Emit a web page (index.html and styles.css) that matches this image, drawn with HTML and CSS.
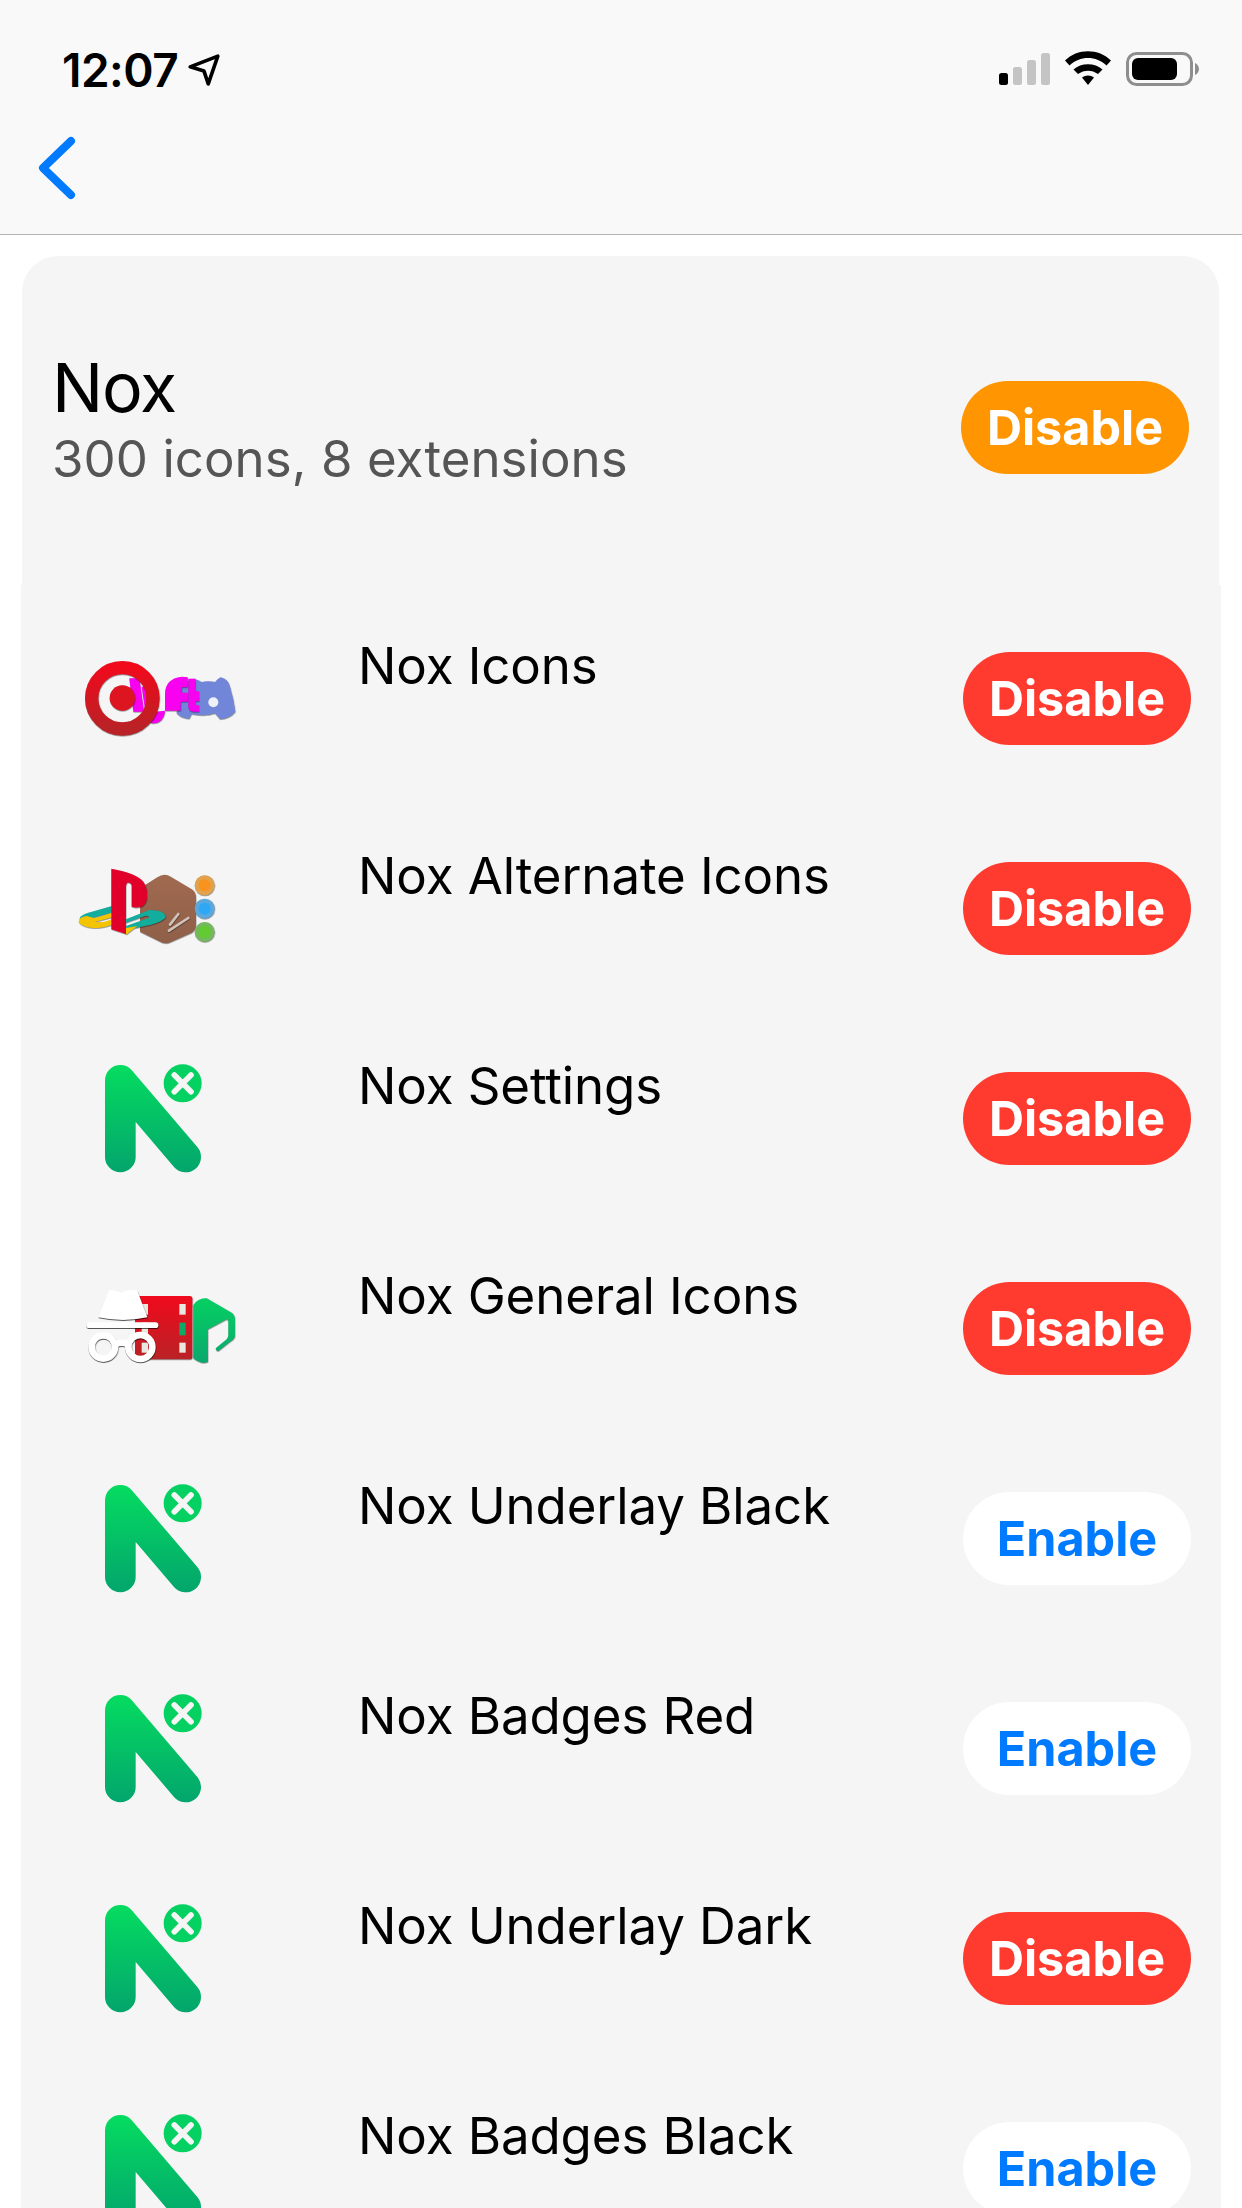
FILE: index.html
```html
<!DOCTYPE html>
<html lang="en">
<head>
<meta charset="utf-8">
<title>Nox</title>
<link rel="stylesheet" href="styles.css">
</head>
<body>
<svg class="defs" width="0" height="0" aria-hidden="true">
  <defs>
    <linearGradient id="g-green" gradientUnits="userSpaceOnUse" x1="0" y1="75" x2="0" y2="397">
      <stop offset="0" stop-color="#05dc60"/><stop offset="1" stop-color="#03a56c"/>
    </linearGradient>
    <linearGradient id="g-green2" x1="0" y1="0" x2="0" y2="1">
      <stop offset="0" stop-color="#05d062"/><stop offset="1" stop-color="#0aa86e"/>
    </linearGradient>
    <linearGradient id="g-red" x1="0" y1="0" x2="0" y2="1">
      <stop offset="0" stop-color="#f00a1c"/><stop offset="1" stop-color="#b92226"/>
    </linearGradient>
    <linearGradient id="g-brown" x1="0" y1="0" x2="0" y2="1">
      <stop offset="0" stop-color="#a06a50"/><stop offset="1" stop-color="#8f5f48"/>
    </linearGradient>
    <symbol id="nox-mark" viewBox="0 0 660 468">
      <path d="M211 351V121L407 351" fill="none" stroke="url(#g-green)" stroke-width="92" stroke-linecap="round" stroke-linejoin="round"/>
      <circle cx="398" cy="130" r="57" fill="#05d062"/>
      <path d="M373 105l50 50M423 105l-50 50" fill="none" stroke="#f5f5f5" stroke-width="17" stroke-linecap="round"/>
    </symbol>
  </defs>
</svg>
<header class="top">
  <div class="status">
    <span class="time">12:07</span>
    <svg class="loc" viewBox="0 0 32 32"><path d="M3 13L29 3L20 29L16 17Z" fill="none" stroke="#000" stroke-width="3.4" stroke-linejoin="round"/></svg>
    <svg class="sys" viewBox="0 0 210 60">
      <rect x="9" y="33" width="9" height="12" rx="2.5" fill="#000"/>
      <rect x="23" y="27" width="9" height="18" rx="2.5" fill="#c4c4c4"/>
      <rect x="37" y="20" width="9" height="25" rx="2.5" fill="#c4c4c4"/>
      <rect x="51" y="13" width="9" height="32" rx="2.5" fill="#c4c4c4"/>
      <path d="M75 20.5C87 8 109 8 121 20.5L116.500 25.500C106.500 15.500 89.500 15.500 79.500 25.500Z" fill="#000"/>
      <path d="M83.500 29.500C91 22.500 105 22.500 112.500 29.500L108 34C102 29.500 94 29.500 88 34Z" fill="#000"/>
      <path d="M92 37.500C95.500 34.800 100.500 34.800 104 37.500L98 45Z" fill="#000"/>
      <rect x="137.500" y="13.500" width="64" height="31" rx="9" fill="none" stroke="#8e8e8e" stroke-width="3"/>
      <rect x="142" y="18" width="45" height="22" rx="6" fill="#000"/>
      <path d="M205 23c2.500 1 4 3.500 4 6s-1.500 5-4 6Z" fill="#8e8e8e"/>
    </svg>
  </div>
  <nav class="nav">
    <svg class="back" viewBox="0 0 44 70"><path d="M36 8L8 35L36 62" fill="none" stroke="#007aff" stroke-width="8" stroke-linecap="round" stroke-linejoin="round"/></svg>
  </nav>
</header>
<main>
  <section class="pack">
    <div class="pack-text">
      <h1 class="pack-name">Nox</h1>
      <p class="pack-info">300 icons, 8 extensions</p>
    </div>
    <button class="pill pill-orange pill-head">Disable</button>
  </section>
  <ul class="list">
    <li class="row">
      <svg class="ico" viewBox="0 0 660 468">
        <g class="sh">
          <path d="M432 176Q450 182 455 186Q475 182 495 186Q500 178 512 172Q535 178 540 200Q552 240 556 275Q540 295 510 298L495 280Q465 290 425 282L418 296Q395 296 380 280Q382 230 395 200Q405 182 432 176Z" fill="#7286d9"/>
          <circle cx="490" cy="247" r="15" fill="#eef0fa"/>
        </g>
        <g class="sh">
          <path d="M238 175H268L282 275H250Z" fill="#f800f0"/>
          <path d="M275 200H305V262Q305 275 318 275L345 272Q342 310 305 310L290 300Z" fill="#f800f0"/>
          <path d="M345 272V222Q345 176 395 170L413 172V202H395V218H413V245H392V272Z" fill="#f800f0"/>
          <path d="M415 176H436V214H447V244H436V256H447V275H430Q415 275 415 258Z" fill="#f800f0"/>
        </g>
        <g class="sh">
          <circle cx="217" cy="235" r="92" fill="none" stroke="url(#g-red)" stroke-width="40"/>
          <circle cx="217" cy="234" r="38" fill="#dc1520"/>
        </g>
      </svg>
      <span class="title">Nox Icons</span>
      <button class="pill pill-red">Disable</button>
    </li>
    <li class="row">
      <svg class="ico" viewBox="0 0 660 468">
        <path class="sh" d="M322 142Q342 128 362 140L425 178Q438 186 438 204V286Q438 300 425 308L362 336Q345 344 328 334L270 305V175Z" fill="url(#g-brown)"/>
        <path class="sh" d="M360 284L385 252M357 302L415 264" fill="none" stroke="#d2c3ba" stroke-width="8" stroke-linecap="round"/>
        <g class="sh">
          <circle cx="464" cy="166" r="30" fill="#e2a24c"/><circle cx="464" cy="166" r="18" fill="#f7931e"/>
          <circle cx="464" cy="236" r="30" fill="#5aa9de"/><circle cx="464" cy="236" r="18" fill="#2ea7f5"/>
          <circle cx="464" cy="306" r="30" fill="#74b95c"/><circle cx="464" cy="306" r="18" fill="#62cb32"/>
        </g>
        <g class="sh">
          <path d="M186 228L110 250Q84 260 90 270L135 262L186 248Z" fill="#12ad9d"/>
          <path d="M186 248L135 265L110 258Q86 262 86 275Q92 290 130 294Q160 294 186 284V268Q160 280 135 276L186 262Z" fill="#f5c400"/>
          <path d="M184 116Q260 130 280 155Q295 175 290 210Q282 240 245 230V165Q240 155 232 158Q228 160 228 170V312L184 298Z" fill="#e0002a"/>
          <path d="M228 268L298 240Q345 240 347 262Q340 275 300 285L228 300V288L296 264Q298 256 285 258L228 278Z" fill="#12ad9d"/>
          <path d="M228 294L262 288L228 314Z" fill="#f5c400"/>
        </g>
      </svg>
      <span class="title">Nox Alternate Icons</span>
      <button class="pill pill-red">Disable</button>
    </li>
    <li class="row">
      <svg class="ico"><use href="#nox-mark"/></svg>
      <span class="title">Nox Settings</span>
      <button class="pill pill-red">Disable</button>
    </li>
    <li class="row">
      <svg class="ico" viewBox="0 0 660 468">
        <path class="sh" d="M430 165Q445 143 470 145L545 188Q555 195 555 210V255Q555 268 540 275L505 303Q497 305 497 295L530 268Q535 262 535 255V212L530 208L474 238V335Q455 345 430 325Z" fill="url(#g-green2)"/>
        <g class="sh">
          <rect x="255" y="138" width="172" height="190" rx="8" fill="url(#g-red)"/>
          <rect x="388" y="162" width="19" height="32" fill="#e8e8e0"/>
          <rect x="388" y="218" width="19" height="38" fill="#0da968"/>
          <rect x="388" y="278" width="19" height="30" fill="#e8e8e0"/>
          <rect x="275" y="162" width="19" height="32" fill="#e8e8e0"/>
          <rect x="275" y="218" width="19" height="38" fill="#e8e8e0"/>
          <rect x="275" y="278" width="19" height="30" fill="#e8e8e0"/>
        </g>
        <g class="sh sh-strong" fill="#fff">
          <path d="M175 122Q190 116 212 128Q235 116 262 122L292 202Q220 218 145 202Z"/>
          <rect x="109" y="217" width="216" height="17" rx="8.500"/>
          <g fill="none" stroke="#fff" stroke-width="20">
            <circle cx="160" cy="291" r="35"/><circle cx="271" cy="291" r="36"/>
            <path d="M195 284Q215 272 235 284"/>
          </g>
        </g>
      </svg>
      <span class="title">Nox General Icons</span>
      <button class="pill pill-red">Disable</button>
    </li>
    <li class="row">
      <svg class="ico"><use href="#nox-mark"/></svg>
      <span class="title">Nox Underlay Black</span>
      <button class="pill pill-white">Enable</button>
    </li>
    <li class="row">
      <svg class="ico"><use href="#nox-mark"/></svg>
      <span class="title">Nox Badges Red</span>
      <button class="pill pill-white">Enable</button>
    </li>
    <li class="row">
      <svg class="ico"><use href="#nox-mark"/></svg>
      <span class="title">Nox Underlay Dark</span>
      <button class="pill pill-red">Disable</button>
    </li>
    <li class="row">
      <svg class="ico"><use href="#nox-mark"/></svg>
      <span class="title">Nox Badges Black</span>
      <button class="pill pill-white">Enable</button>
    </li>
  </ul>
</main>
</body>
</html>
```
FILE: styles.css
```css
* { box-sizing: border-box; }
html, body { margin: 0; padding: 0; }
body {
  width: 1242px;
  height: 2208px;
  overflow: hidden;
  background: #fff;
  color: #000;
  font-family: Inter, "Liberation Sans", sans-serif;
}
.defs { position: absolute; }
.top {
  height: 235px;
  padding-top: 40px;
  background: #f9f9f9;
  border-bottom: 1px solid #b2b2b2;
}
.status {
  display: flex;
  align-items: center;
  height: 60px;
  padding: 0 42px 0 62px;
}
.time { font-size: 46px; font-weight: 600; letter-spacing: -0.5px; line-height: 60px; }
.loc { width: 34px; height: 34px; margin-left: 9px; }
.sys { width: 210px; height: 60px; margin-left: auto; }
.nav { display: flex; align-items: center; height: 136px; padding-left: 35px; }
.back { width: 44px; height: 70px; }
main { padding-top: 21px; }
.pack {
  display: flex;
  align-items: center;
  justify-content: space-between;
  height: 329px;
  margin: 0 23px 0 22px;
  padding: 0 30px;
  background: #f5f5f5;
  border-radius: 36px 36px 0 0;
}
.pack-text { margin-top: 0; }
.pack-name { margin: 0; font-size: 68px; font-weight: 400; line-height: 76px; letter-spacing: -1.2px; }
.pack-info { margin: 0; font-size: 51px; line-height: 68px; color: #555; letter-spacing: 0.05px; }
.list {
  list-style: none;
  margin: 0 21px;
  padding: 8px 0 0;
  background: #f5f5f5;
}
.row {
  display: flex;
  align-items: center;
  height: 210px;
  padding: 0 30px 0 29px;
}
.ico { width: 220px; height: 156px; flex: none; overflow: visible; }
.sh { filter: drop-shadow(1px 2px 2px rgba(0,0,0,.5)); }
.sh-strong { filter: drop-shadow(1px 3px 2px rgba(0,0,0,.65)); }
.title {
  flex: 1;
  align-self: flex-start;
  margin-left: 88px;
  padding-top: 43px;
  font-size: 51px;
  line-height: 60px;
  letter-spacing: -0.1px;
}
.pill {
  flex: none;
  width: 228px;
  height: 93px;
  border: 0;
  border-radius: 47px;
  padding: 0;
  font-family: inherit;
  font-size: 48.5px;
  font-weight: 700;
}
.pill-head { margin-top: 14px; }
.pill-orange { background: #ff9500; color: #fff; }
.pill-red { background: #ff3b30; color: #fff; }
.pill-white { background: #fff; color: #007aff; }
```
